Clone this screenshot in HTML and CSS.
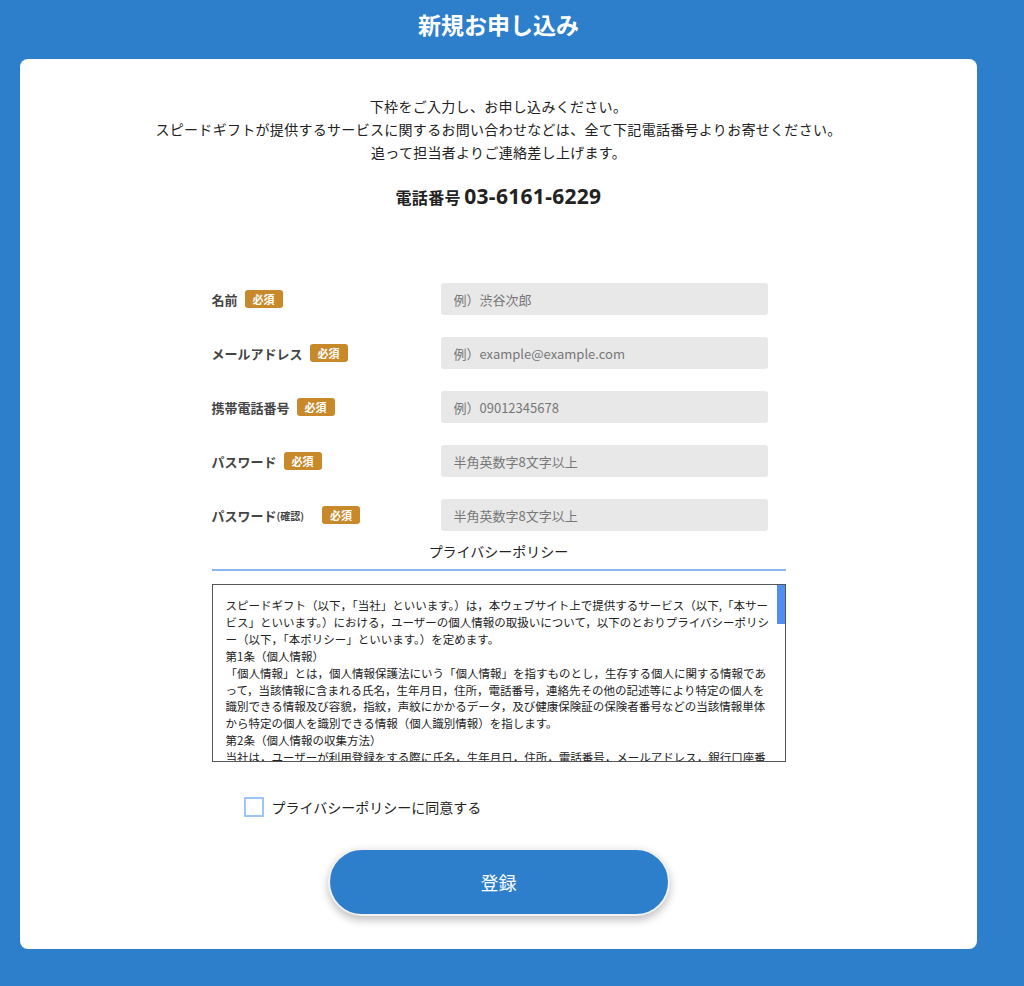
FILE: index.html
```html
<!DOCTYPE html>
<html lang="ja">
<head>
    <meta charset="UTF-8">
    <meta name="viewport" content="width=device-width, initial-scale=1.0">
    <title>新規お申し込み</title>
    <link rel="stylesheet" href="styles.css">
</head>
<body>
    <h1 class="page-title">新規お申し込み</h1>
    <div class="card">
        <div class="intro">
            <p>下枠をご入力し、お申し込みください。<br>
            スピードギフトが提供するサービスに関するお問い合わせなどは、全て下記電話番号よりお寄せください。<br>
            追って担当者よりご連絡差し上げます。</p>
            <p class="tel"><span class="tel-label">電話番号</span> <span class="tel-num">03-6161-6229</span></p>
        </div>

        <form class="signup">
            <div class="row">
                <label class="label">名前<span class="req">必須</span></label>
                <input class="field" type="text" placeholder="例）渋谷次郎">
            </div>
            <div class="row">
                <label class="label">メールアドレス<span class="req">必須</span></label>
                <input class="field" type="email" placeholder="例）example@example.com">
            </div>
            <div class="row">
                <label class="label">携帯電話番号<span class="req">必須</span></label>
                <input class="field" type="tel" placeholder="例）09012345678">
            </div>
            <div class="row">
                <label class="label">パスワード<span class="req">必須</span></label>
                <input class="field" type="password" placeholder="半角英数字8文字以上">
            </div>
            <div class="row row-last">
                <label class="label">パスワード<small>(確認)</small><span class="req req-wide">必須</span></label>
                <input class="field" type="password" placeholder="半角英数字8文字以上">
            </div>

            <h2 class="policy-title">プライバシーポリシー</h2>
            <div class="policy-wrap">
                <div class="policy">
                    <p>スピードギフト（以下，「当社」といいます。）は，本ウェブサイト上で提供するサービス（以下,「本サービス」といいます。）における，ユーザーの個人情報の取扱いについて，以下のとおりプライバシーポリシー（以下，「本ポリシー」といいます。）を定めます。</p>
                    <p>第1条（個人情報）</p>
                    <p>「個人情報」とは，個人情報保護法にいう「個人情報」を指すものとし，生存する個人に関する情報であって，当該情報に含まれる氏名，生年月日，住所，電話番号，連絡先その他の記述等により特定の個人を識別できる情報及び容貌，指紋，声紋にかかるデータ，及び健康保険証の保険者番号などの当該情報単体から特定の個人を識別できる情報（個人識別情報）を指します。</p>
                    <p>第2条（個人情報の収集方法）</p>
                    <p>当社は，ユーザーが利用登録をする際に氏名，生年月日，住所，電話番号，メールアドレス，銀行口座番号，クレジットカード番号，運転免許証番号などの個人情報をお尋ねすることがあります。</p>
                </div>
            </div>

            <label class="agree">
                <input type="checkbox" class="agree-box">
                <span>プライバシーポリシーに同意する</span>
            </label>

            <div class="submit-wrap">
                <button type="submit" class="submit">登録</button>
            </div>
        </form>
    </div>
</body>
</html>
```

FILE: styles.css
```css
body {
    font-family: 'Noto Sans CJK JP', 'Noto Sans', sans-serif;
    background-color: #2e7fcb;
    color: #222;
    margin: 0;
    padding: 0 0 37px;
}
.page-title {
    color: #fff;
    font-size: 23px;
    font-weight: bold;
    text-align: center;
    margin: 0;
    padding: 0 27px 0 0;
    height: 59px;
    line-height: 48px;
}
.card {
    background-color: #fff;
    border-radius: 8px;
    margin: 0 47px 0 20px;
    padding: 36px 0 33px;
}
.intro {
    text-align: center;
}
.intro p {
    margin: 0;
    font-size: 14px;
    line-height: 23px;
    letter-spacing: 0.3px;
}
.intro .tel {
    margin-top: 17px;
    font-weight: bold;
    line-height: 30px;
}
.tel-label {
    font-size: 16px;
}
.tel-num {
    font-family: 'Noto Sans', sans-serif;
    font-size: 21px;
    letter-spacing: 0.3px;
}
.signup {
    width: 574px;
    margin: 70px auto 0;
}
.row {
    display: flex;
    align-items: center;
    margin-bottom: 22px;
}
.row-last {
    margin-bottom: 10px;
}
.label {
    width: 229px;
    font-size: 13px;
    font-weight: bold;
    color: #444;
    display: flex;
    align-items: center;
}
.label small {
    font-size: 10px;
}
.req {
    background-color: #c8892a;
    color: #fff;
    font-size: 11px;
    font-weight: bold;
    padding: 0 8px;
    line-height: 18px;
    border-radius: 3px;
    margin-left: 7px;
}
.req-wide {
    margin-left: 18px;
}
.field {
    width: 327px;
    height: 32px;
    box-sizing: border-box;
    border: none;
    border-radius: 3px;
    background-color: #e8e8e8;
    padding: 0 13px;
    font-family: inherit;
    font-size: 13px;
    color: #333;
}
.field::placeholder {
    color: #777;
}
.policy-title {
    font-size: 14px;
    font-weight: normal;
    text-align: center;
    margin: 0;
    padding-bottom: 8px;
    line-height: 20px;
    border-bottom: 2px solid #8ab9f2;
}
.policy-wrap {
    position: relative;
    margin-top: 13px;
}
.policy-wrap::after {
    content: '';
    position: absolute;
    top: 1px;
    right: 1px;
    width: 8px;
    height: 39px;
    background: #4e8ff0;
}
.policy {
    height: 178px;
    box-sizing: border-box;
    border: 1px solid #555;
    padding: 12px 12px 0 13px;
    overflow-y: auto;
    font-size: 11.5px;
    line-height: 16.9px;
    color: #222;
}
.policy p {
    margin: 0;
}
.agree {
    display: flex;
    align-items: center;
    margin: 35px 0 0 32px;
    font-size: 14px;
    color: #222;
    cursor: pointer;
}
.agree-box {
    appearance: none;
    width: 20px;
    height: 20px;
    box-sizing: border-box;
    border: 2px solid #9dc4f6;
    margin: 0 8px 0 0;
    background: #fff;
}
.submit-wrap {
    text-align: center;
    margin-top: 31px;
}
.submit {
    width: 342px;
    height: 68px;
    border: 2px solid #f2f2f2;
    border-radius: 34px;
    background-color: #2e7fcb;
    color: #fff;
    font-family: inherit;
    font-size: 18px;
    box-shadow: 0 4px 8px rgba(0, 0, 0, 0.25);
    cursor: pointer;
}
```
